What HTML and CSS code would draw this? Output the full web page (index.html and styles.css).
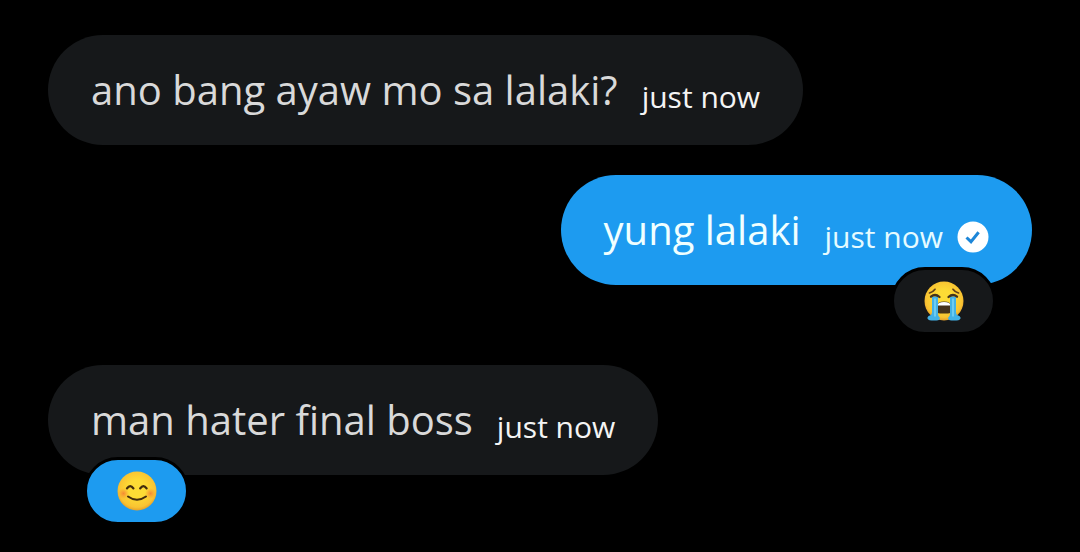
FILE: index.html
```html
<!DOCTYPE html>
<html lang="tl">
<head>
<meta charset="utf-8">
<meta name="viewport" content="width=device-width, initial-scale=1">
<title>Messages</title>
<link rel="stylesheet" href="styles.css">
</head>
<body>
<main class="chat">
  <article class="bubble received">
    <p class="text">ano bang ayaw mo sa lalaki?</p>
    <time class="time">just now</time>
  </article>

  <article class="bubble sent has-reaction">
    <p class="text">yung lalaki</p>
    <time class="time">just now</time>
    <svg class="status" viewBox="0 0 32 32" role="img" aria-label="Sent">
      <circle cx="16" cy="16" r="15.5" fill="#fff"/>
      <path d="M9.500 16.500l4.500 4.200 7.600-9.500" fill="none" stroke="#1d86d8" stroke-width="3"/>
    </svg>
    <button class="reaction reaction-dark" type="button" aria-label="Loudly crying">
      <svg class="emoji" viewBox="0 0 42 42" aria-hidden="true">
        <defs>
          <radialGradient id="face" cx=".5" cy=".45" r=".55">
            <stop offset=".4" stop-color="#fddb35"/>
            <stop offset=".85" stop-color="#f9c332"/>
            <stop offset="1" stop-color="#e5a02a"/>
          </radialGradient>
          <radialGradient id="blush">
            <stop offset="0" stop-color="#f37a35" stop-opacity=".8"/>
            <stop offset="1" stop-color="#f99030" stop-opacity="0"/>
          </radialGradient>
        </defs>
        <circle cx="21" cy="21" r="19.5" fill="url(#face)"/>
        <path d="M6.500 13q3.500-.8 5.500-3.700M35.500 13q-3.500-.8-5.500-3.700" fill="none" stroke="#5f401b" stroke-width="1.700" stroke-linecap="round"/>
        <path d="M14 31v-5q0-4.500 7-4.500t7 4.500v5q0 2.500-3 2.500h-8q-3 0-3-2.500z" fill="#45321b"/>
        <path d="M14.500 25.500q0-3.500 6.500-3.500t6.500 3.500z" fill="#fff"/>
        <path d="M9 16.500h6V34q0 2.500 1.800 3.500.5 3-3.300 3H8.500q-4.500-.3-4-3 .6-2 3-2.200Q9 35 9 32zM33 16.500h-6V34q0 2.500-1.800 3.500-.5 3 3.300 3h5q4.500-.3 4-3-.6-2-3-2.200Q33 35 33 32z" fill="#43b2e8"/>
        <path d="M12 18.500v18M30 18.500v18" stroke="#73cff3" stroke-width="1.800"/>
        <path d="M8 16.700q4.200-3.600 8.500.3M25.500 17q4.300-3.900 8.500-.3" fill="none" stroke="#43321c" stroke-width="2.300" stroke-linecap="round"/>
      </svg>
    </button>
  </article>

  <article class="bubble received">
    <p class="text">man hater final boss</p>
    <time class="time">just now</time>
    <button class="reaction reaction-blue" type="button" aria-label="Smiling">
      <svg class="emoji" viewBox="0 0 42 42" aria-hidden="true">
        <circle cx="21" cy="21" r="19.500" fill="url(#face)"/>
        <circle cx="7.500" cy="23.500" r="5.500" fill="url(#blush)"/>
        <circle cx="34.500" cy="23.500" r="5.500" fill="url(#blush)"/>
        <path d="M11 18.300q3.200-4.500 6.400 0M24.200 18.300q3.200-4.500 6.400 0" fill="none" stroke="#422b0d" stroke-width="2.300" stroke-linecap="round"/>
        <path d="M12 26.500q9 6.500 18 0" fill="none" stroke="#422b0d" stroke-width="2" stroke-linecap="round"/>
      </svg>
    </button>
  </article>
</main>
</body>
</html>
```
FILE: styles.css
```css
* {
  box-sizing: border-box;
}

body {
  margin: 0;
  background: #000;
  font-family: "Open Sans", "Noto Sans", sans-serif;
}

.chat {
  display: flex;
  flex-direction: column;
  gap: 30px;
  min-height: 100vh;
  padding: 35px 48px;
}

.bubble {
  position: relative;
  display: flex;
  align-items: center;
  min-height: 110px;
  padding: 24px 43px;
  border-radius: 55px;
}

.received {
  align-self: flex-start;
  background: #16181a;
  color: #d9d9d9;
}

.sent {
  align-self: flex-end;
  background: #1d9bf0;
  color: #f0ffff;
}

.has-reaction {
  margin-bottom: 50px;
}

.text {
  margin: 0;
  font-size: 40px;
  line-height: 60px;
}

.time {
  margin-left: 24px;
  padding-top: 14px;
  color: #f4f4f4;
  font-size: 30px;
  line-height: 40px;
}

.sent .time {
  color: #e6fbff;
}

.status {
  width: 32px;
  height: 32px;
  margin-top: 14px;
  margin-left: 14px;
}

.reaction {
  position: absolute;
  bottom: -50px;
  display: flex;
  align-items: center;
  justify-content: center;
  width: 105px;
  height: 68px;
  padding: 0;
  border: 3px solid #000;
  border-radius: 34px;
}

.reaction-dark {
  right: 36px;
  background: #16181a;
}

.reaction-blue {
  left: 36px;
  background: #1d9bf0;
}

.emoji {
  width: 42px;
  height: 42px;
}
```
